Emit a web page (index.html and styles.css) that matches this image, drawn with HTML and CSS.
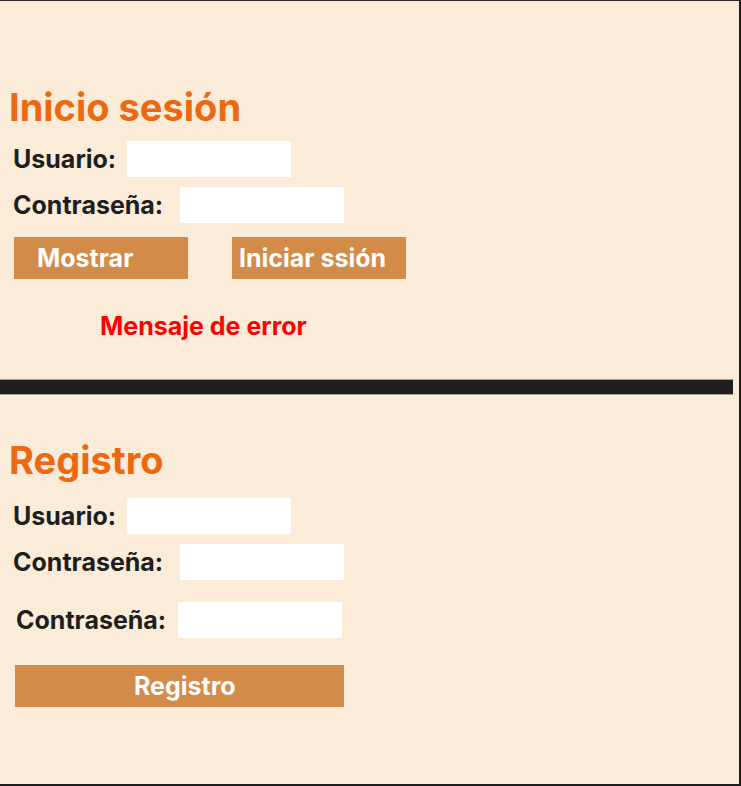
FILE: index.html
```html
<!DOCTYPE html>
<html lang="es">
<head>
<meta charset="utf-8">
<title>Inicio sesión</title>
<link rel="stylesheet" href="styles.css">
</head>
<body>
<div class="frame">
  <section class="login">
    <h1 class="title">Inicio sesión</h1>
    <div class="row row-user">
      <label class="label">Usuario:</label>
      <input class="field" type="text">
    </div>
    <div class="row row-pass">
      <label class="label">Contraseña:</label>
      <input class="field" type="password">
    </div>
    <div class="buttons">
      <button class="btn btn-show">Mostrar</button>
      <button class="btn btn-login">Iniciar ssión</button>
    </div>
    <p class="error">Mensaje de error</p>
  </section>
  <div class="divider"></div>
  <section class="register">
    <h1 class="title title-reg">Registro</h1>
    <div class="row row-user">
      <label class="label">Usuario:</label>
      <input class="field" type="text">
    </div>
    <div class="row row-pass">
      <label class="label">Contraseña:</label>
      <input class="field" type="password">
    </div>
    <div class="row row-pass2">
      <label class="label">Contraseña:</label>
      <input class="field" type="password">
    </div>
    <button class="btn btn-register">Registro</button>
  </section>
</div>
</body>
</html>
```

FILE: styles.css
```css
* { box-sizing: border-box; }
html, body { margin: 0; padding: 0; background: #1e1e1e; }
body { font-family: Inter, "Noto Sans", sans-serif; }
.frame {
  width: 741px;
  height: 786px;
  background: #faecd8;
  border-top: 1px solid #2a2a2a;
  border-right: 2px solid #1e1e1e;
  border-bottom: 2px solid #1e1e1e;
  overflow: hidden;
}
.title {
  margin: 87px 0 0 9px;
  font-size: 38px;
  line-height: 38px;
  font-weight: 700;
  color: #ec6912;
}
.row {
  display: flex;
  align-items: center;
  padding-left: 13px;
}
.row-user { margin-top: 15px; }
.row-pass { margin-top: 10px; }
.label {
  font-size: 25px;
  font-weight: 700;
  color: #1e1e1e;
  line-height: 36px;
}
.field {
  width: 164px;
  height: 36px;
  border: 0;
  background: #ffffff;
  outline: none;
}
.row-user .field { margin-left: 11px; }
.row-pass .field { margin-left: 17px; }
.buttons {
  display: flex;
  gap: 44px;
  padding-left: 14px;
  margin-top: 14px;
}
.btn {
  height: 42px;
  border: 0;
  background: #d28b48;
  color: #ffffff;
  font-family: Inter, "Noto Sans", sans-serif;
  font-size: 25px;
  font-weight: 700;
  line-height: 42px;
  padding: 0;
  text-align: left;
}
.btn-show { width: 174px; padding-left: 23px; }
.btn-login { width: 174px; padding-left: 7px; }
.error {
  margin: 35px 0 0 100px;
  font-size: 25px;
  line-height: 24px;
  font-weight: 700;
  color: #ff0000;
}
.divider {
  margin-top: 41px;
  width: 733px;
  height: 16px;
  background: #1e1e1e;
  border-top: 1px solid #a59d90;
  border-bottom: 1px solid #a59d90;
}
.title-reg { margin-top: 46px; }
.register .row-user { margin-top: 19px; }
.row-pass2 { margin-top: 22px; padding-left: 16px; }
.row-pass2 .field { margin-left: 12px; }
.btn-register {
  display: block;
  margin: 27px 0 0 15px;
  width: 329px;
  padding-left: 119px;
}
```
